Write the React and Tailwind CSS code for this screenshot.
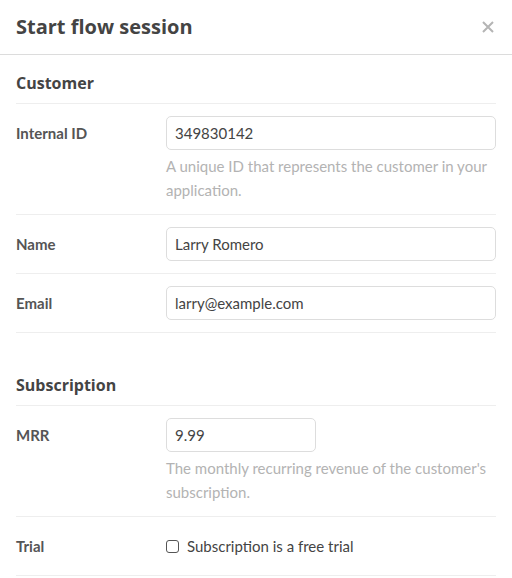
import React from 'react';

const body = { fontFamily: 'Lato, "Noto Sans", sans-serif' };

const Row = ({ label, children, help }) => (
  <div className="flex border-b border-[#eeeeee] py-[12px]">
    <div className="w-[150px] shrink-0 pt-[6px] text-[15px] leading-[22px] font-bold text-[#555555]">{label}</div>
    <div className="flex-1">
      {children}
      {help && <p className="mt-[5px] text-[15px] leading-[23.5px] text-[#b3b3b3]">{help}</p>}
    </div>
  </div>
);

const Input = ({ value, className = 'w-full' }) => (
  <input
    readOnly
    value={value}
    className={`${className} block h-[34px] rounded-[5px] border border-[#dddddd] px-[8px] text-[15px] text-[#444444] outline-none`}
    style={body}
  />
);

const Section = ({ title, children, first }) => (
  <div className={first ? '' : 'mt-[24px]'}>
    <h3
      className="border-b border-[#eeeeee] pt-[19px] pb-[11px] text-[16px] leading-[18px] font-bold text-[#444444]"
      style={{ fontFamily: '"Open Sans", sans-serif' }}
    >
      {title}
    </h3>
    {children}
  </div>
);

export default function App() {
  return (
    <div className="w-[512px] h-[578px] overflow-hidden bg-white" style={body}>
      <div className="flex h-[55px] items-center justify-between border-b border-[#dcdcdc] px-4">
        <h2 className="text-[20px] font-bold text-[#444444]" style={{ fontFamily: '"Open Sans", sans-serif' }}>
          Start flow session
        </h2>
        <svg width="12" height="12" viewBox="0 0 12 12" className="mr-[2px]">
          <path d="M1 1L11 11M11 1L1 11" stroke="#b5b5b5" strokeWidth="2" />
        </svg>
      </div>
      <div className="px-4">
        <Section title="Customer" first>
          <Row label="Internal ID" help="A unique ID that represents the customer in your application.">
            <Input value="349830142" />
          </Row>
          <Row label="Name">
            <Input value="Larry Romero" />
          </Row>
          <Row label="Email">
            <Input value="larry@example.com" />
          </Row>
        </Section>
        <Section title="Subscription">
          <Row label="MRR" help="The monthly recurring revenue of the customer's subscription.">
            <Input value="9.99" className="w-[150px]" />
          </Row>
          <Row label="Trial">
            <label className="flex h-[34px] items-center gap-[8px] text-[15px] text-[#444444]">
              <span className="h-[13px] w-[13px] rounded-[3px] border border-[#555555]" />
              Subscription is a free trial
            </label>
          </Row>
        </Section>
      </div>
    </div>
  );
}
